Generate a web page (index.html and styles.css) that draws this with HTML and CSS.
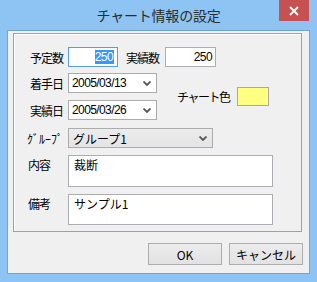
FILE: index.html
```html
<!DOCTYPE html>
<html lang="ja">
<head>
<meta charset="utf-8">
<link rel="stylesheet" href="styles.css">
</head>
<body>
<div class="window">
  <div class="titlebar">
    <span class="title">チャート情報の設定</span>
    <div class="close">
      <svg width="10" height="10" viewBox="0 0 10 10"><path d="M1 1 L9 9 M9 1 L1 9" stroke="#fff" stroke-width="1.8" fill="none"/></svg>
    </div>
  </div>
  <div class="client">
    <div class="group">
      <div class="row row1">
        <span class="lbl">予定数</span>
        <div class="edit focus"><span class="sel">250</span></div>
        <span class="lbl2">実績数</span>
        <div class="edit edit2"><span class="num">250</span></div>
      </div>
      <div class="dates">
        <div class="datecol">
          <div class="row">
            <span class="lbl">着手日</span>
            <div class="combo date"><span class="num">2005/03/13</span><svg class="chev" width="8" height="5" viewBox="0 0 8 5"><path d="M0.5 0.5 L4 4 L7.5 0.5" stroke="#555" stroke-width="1.8" fill="none"/></svg></div>
          </div>
          <div class="row row3">
            <span class="lbl">実績日</span>
            <div class="combo date"><span class="num">2005/03/26</span><svg class="chev" width="8" height="5" viewBox="0 0 8 5"><path d="M0.5 0.5 L4 4 L7.5 0.5" stroke="#555" stroke-width="1.8" fill="none"/></svg></div>
          </div>
        </div>
        <span class="lbl3">チャート色</span>
        <div class="swatch"></div>
      </div>
      <div class="row row4">
        <span class="lbl lbl-grp">ｸﾞﾙｰﾌﾟ</span>
        <div class="combo list"><span>グループ1</span><svg class="chev" width="8" height="5" viewBox="0 0 8 5"><path d="M0.5 0.5 L4 4 L7.5 0.5" stroke="#555" stroke-width="1.8" fill="none"/></svg></div>
      </div>
      <div class="row rowtxt row5">
        <span class="lbl lbl-txt">内容</span>
        <div class="memo m1">裁断</div>
      </div>
      <div class="row rowtxt row6">
        <span class="lbl lbl-txt">備考</span>
        <div class="memo m2">サンプル1</div>
      </div>
    </div>
    <div class="buttons">
      <div class="btn">OK</div>
      <div class="btn">キャンセル</div>
    </div>
  </div>
</div>
</body>
</html>
```
FILE: styles.css
```css
* { box-sizing: border-box; }
html, body { margin: 0; padding: 0; }
body {
  width: 317px;
  height: 282px;
  overflow: hidden;
  font-family: "Noto Sans CJK JP", "Noto Sans", sans-serif;
  font-size: 12px;
  color: #000;
}
.window {
  width: 317px;
  height: 282px;
  background: #8dc4f4;
  display: flex;
  flex-direction: column;
}
.titlebar {
  position: relative;
  height: 30px;
  display: flex;
  align-items: center;
  justify-content: center;
}
.title {
  font-size: 14px;
  color: #2c2c2c;
  letter-spacing: -0.2px;
}
.close {
  position: absolute;
  left: 279px;
  top: 0;
  width: 30px;
  height: 21px;
  background: #c75050;
  display: flex;
  align-items: center;
  justify-content: center;
}
.client {
  margin: 0 7px 8px 7px;
  height: 244px;
  border: 1px solid #6ea6d9;
  background: #f0f0f0;
  display: flex;
  flex-direction: column;
}
.group {
  margin: 2px 0 0 5px;
  width: 289px;
  height: 199px;
  border: 1px solid #a0a0a0;
  box-shadow: inset 1px 1px 0 #fff;
  padding: 13px 0 0 16px;
  display: flex;
  flex-direction: column;
}
.row {
  display: flex;
  align-items: center;
  height: 20px;
}
.lbl {
  width: 38px;
  flex: none;
  white-space: nowrap;
  letter-spacing: -1px;
}
.lbl-grp { margin-left: -3px; width: 41px; letter-spacing: 0; }
.lbl-txt { margin-left: -2px; width: 40px; align-self: flex-start; padding-top: 2px; line-height: 16px; }
.edit {
  height: 20px;
  background: #fff;
  border: 1px solid #abadb3;
  display: flex;
  align-items: center;
  justify-content: flex-end;
  padding-right: 3px;
}
.focus {
  width: 50px;
  border-color: #569de5;
}
.sel {
  background: #3399ff;
  color: #fff;
  font-family: "Liberation Sans", sans-serif;
  letter-spacing: -0.6px;
  line-height: 14px;
  padding: 0 1px 0 0;
}
.num {
  font-family: "Liberation Sans", sans-serif;
  letter-spacing: -0.6px;
}
.lbl2 { margin-left: 8px; width: 39px; white-space: nowrap; letter-spacing: -1px; flex: none; }
.edit2 { width: 51px; }
.dates {
  display: flex;
  align-items: center;
  margin-top: 6px;
}
.datecol { display: flex; flex-direction: column; }
.row3 { margin-top: 7px; }
.combo {
  height: 20px;
  border: 1px solid #acacac;
  display: flex;
  align-items: center;
  justify-content: space-between;
  padding: 0 5px 0 3px;
}
.date { width: 89px; background: #fff; }
.chev { flex: none; }
.lbl3 { margin-left: 20px; white-space: nowrap; width: 60px; flex: none; letter-spacing: -1.5px; }
.swatch {
  width: 32px;
  height: 19px;
  background: #ffff80;
  border: 1px solid #a8a8a8;
}
.row4 { margin-top: 8px; }
.list {
  width: 145px;
  background: linear-gradient(#ececec, #e4e4e4);
  padding-left: 4px;
}
.rowtxt { height: auto; align-items: flex-start; }
.row5 { margin-top: 7px; }
.row6 { margin-top: 7px; }
.memo {
  width: 205px;
  background: #fff;
  border: 1px solid #abadb3;
  padding: 1px 5px;
  line-height: 16px;
}
.m1 { height: 32px; }
.m2 { height: 31px; }
.buttons {
  display: flex;
  justify-content: flex-end;
  gap: 7px;
  margin: 11px 6px 0 0;
}
.btn {
  width: 74px;
  height: 22px;
  border: 1px solid #adadad;
  background: linear-gradient(#ececec, #e2e2e2);
  display: flex;
  align-items: center;
  justify-content: center;
}
```
